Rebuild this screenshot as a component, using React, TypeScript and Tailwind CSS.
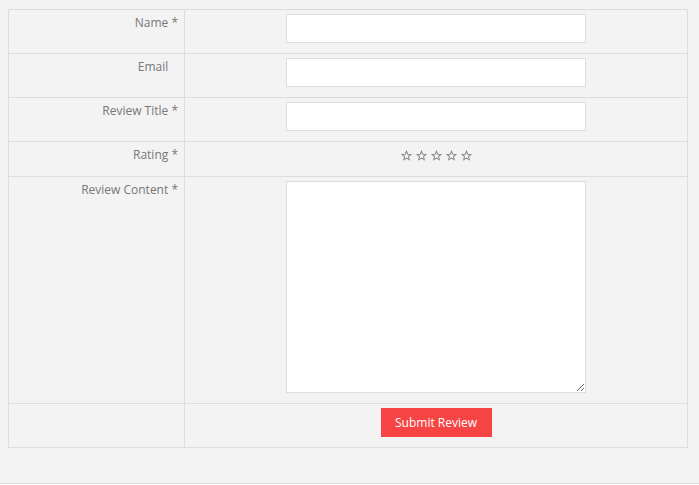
import React from 'react'

const Star = () => (
  <svg width="11" height="11" viewBox="0 0 24 24" fill="none" stroke="#8a8a8a" strokeWidth="2.2" strokeLinejoin="miter">
    <path d="M12 2.5l2.7 6.6 7.1.5-5.4 4.6 1.7 7-6.1-3.8-6.1 3.8 1.7-7-5.4-4.6 7.1-.5z" />
  </svg>
)

interface RowProps {
  label: string
  required?: boolean
  height: string
  children?: React.ReactNode
}

const Row: React.FC<RowProps> = ({ label, required, height, children }) => (
  <div className={`flex border-b border-[#dddddd] last:border-b-0 ${height}`}>
    <div className="w-[176px] shrink-0 border-r border-[#dddddd] pt-[4px] pr-[6px] text-right text-[12px] leading-[18px] text-[#777777]">
      {label && (
        <>
          {label}{' '}
          <span className={required ? '' : 'invisible'}>*</span>
        </>
      )}
    </div>
    <div className="flex-1 flex justify-center pt-[4px]">{children}</div>
  </div>
)

export default function App() {
  return (
    <div
      className="h-[484px] bg-[#f3f3f3] pt-[9px] pl-[8px] pr-[11px] border-b border-[#dddddd]"
      style={{ fontFamily: '"Open Sans", "Liberation Sans", sans-serif' }}
    >
      <form className="w-[680px] border border-[#dddddd] bg-[#f3f3f3]">
        <Row label="Name" required height="h-[44px]">
          <input type="text" className="w-[300px] h-[29px] bg-white border border-[#dddddd] outline-none" />
        </Row>
        <Row label="Email" height="h-[44px]">
          <input type="email" className="w-[300px] h-[29px] bg-white border border-[#dddddd] outline-none" />
        </Row>
        <Row label="Review Title" required height="h-[44px]">
          <input type="text" className="w-[300px] h-[29px] bg-white border border-[#dddddd] outline-none" />
        </Row>
        <Row label="Rating" required height="h-[35px]">
          <div className="flex gap-[4px] pt-[4px]">
            <Star />
            <Star />
            <Star />
            <Star />
            <Star />
          </div>
        </Row>
        <Row label="Review Content" required height="h-[227px]">
          <textarea className="w-[300px] h-[212px] bg-white border border-[#dddddd] outline-none resize" />
        </Row>
        <Row label="" height="h-[43px]">
          <button
            type="button"
            className="w-[111px] h-[29px] bg-[#f64343] text-white text-[12px] leading-[29px]"
          >
            Submit Review
          </button>
        </Row>
      </form>
    </div>
  )
}
